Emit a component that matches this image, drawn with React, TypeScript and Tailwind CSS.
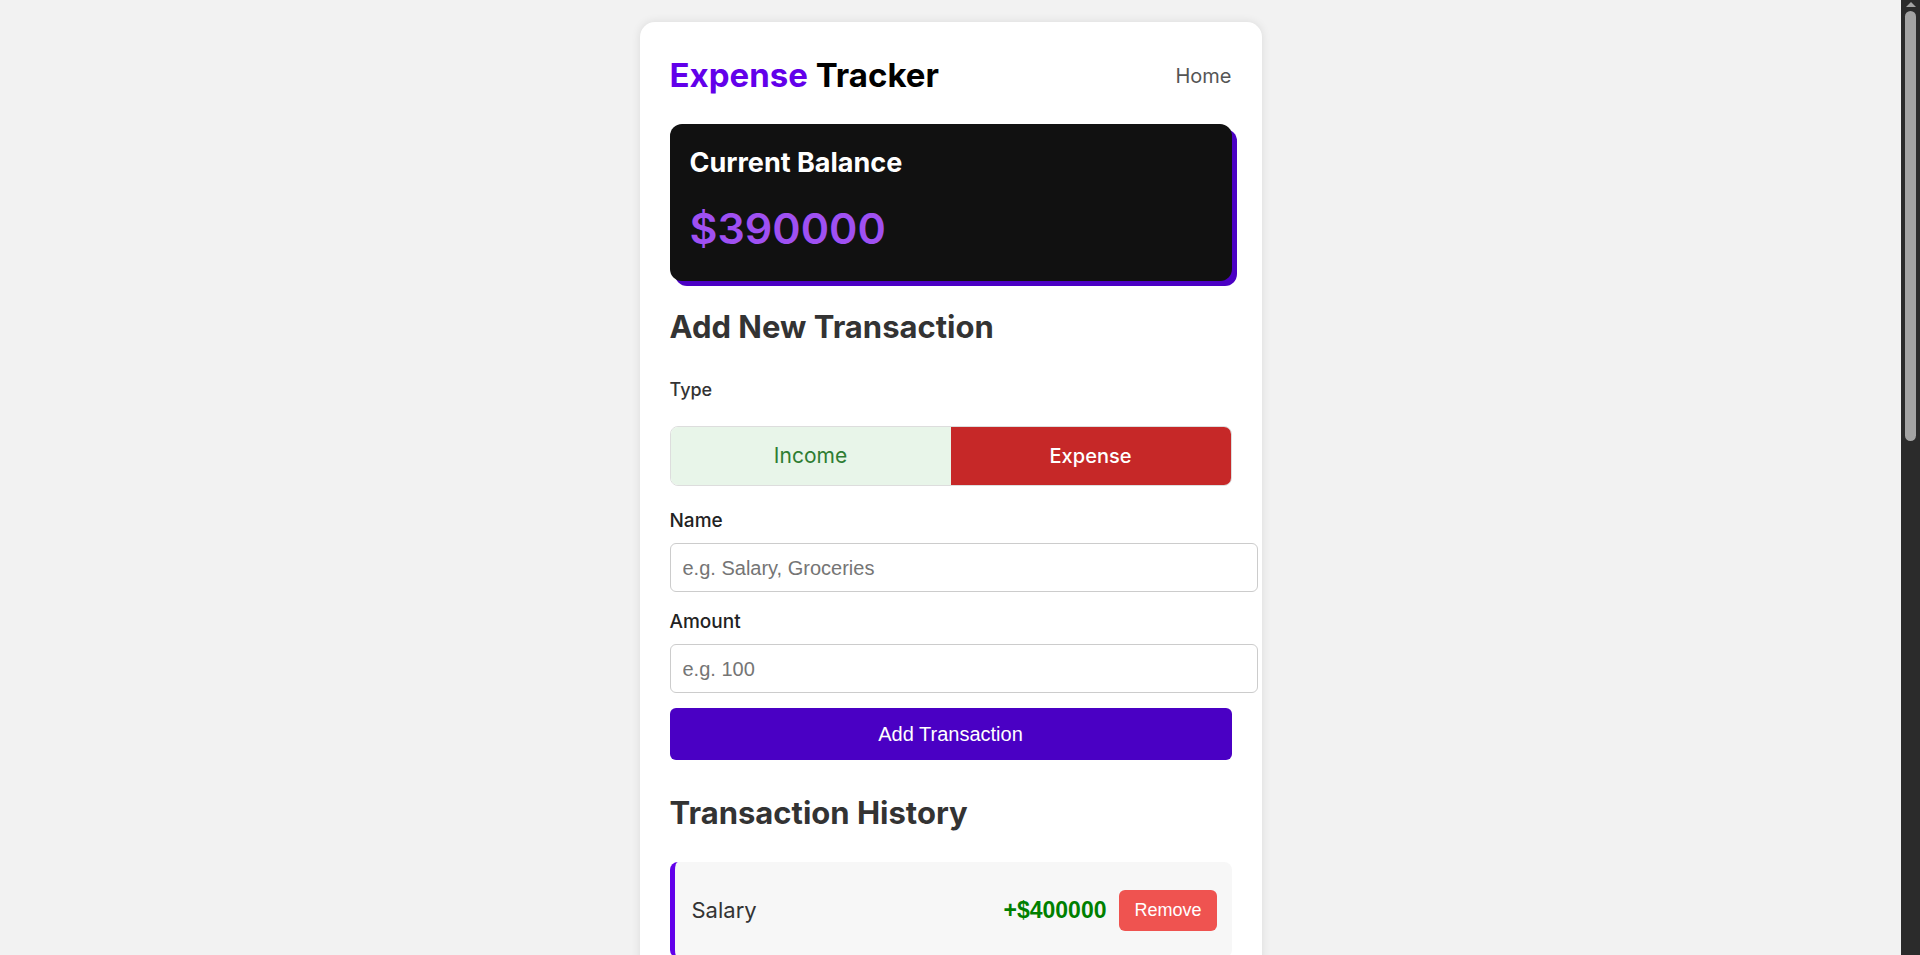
import React, { useState } from 'react';

type Tx = { id: number; name: string; amount: number };

const initial: Tx[] = [
  { id: 1, name: 'Salary', amount: 400000 },
  { id: 2, name: 'Groceries', amount: -10000 },
];

export default function App() {
  const [txs, setTxs] = useState<Tx[]>(initial);
  const [type, setType] = useState<'income' | 'expense'>('expense');
  const balance = txs.reduce((s, t) => s + t.amount, 0);

  return (
    <div className="min-h-screen bg-[#f2f2f2] py-[22px] pr-[19px] font-['Inter',sans-serif] text-[#333]">
      <div className="mx-auto w-[622px] rounded-[15px] bg-white p-[30px] shadow-[0_0_10px_rgba(0,0,0,0.1)]">
        {/* Header */}
        <div className="flex h-[48px] items-center justify-between">
          <h1 className="text-[33px] font-bold text-black">
            <span className="text-[#6200ea]">Expense</span> Tracker
          </h1>
          <a className="text-[20px] text-[#555]">Home</a>
        </div>

        {/* Balance */}
        <div className="mt-[24px] h-[157px] rounded-xl bg-[#111] px-5 pt-5 shadow-[5px_5px_0_#4b00c4]">
          <h2 className="h-[38px] text-[27px] leading-[38px] font-bold text-white">Current Balance</h2>
          <div className="mt-[16px] h-[60px] text-[43px] leading-[60px] font-semibold text-[#9f50f2]">
            ${balance}
          </div>
        </div>

        {/* Form */}
        <h2 className="mt-[26px] h-[40px] text-[31px] leading-[40px] font-bold">Add New Transaction</h2>

        <label className="mt-[31px] block h-[24px] text-[18px] leading-[24px] font-medium">Type</label>
        <div className="mt-[24px] flex h-[60px] overflow-hidden rounded-lg border border-[#ddd]">
          <button
            onClick={() => setType('income')}
            className={
              type === 'income'
                ? 'flex-1 bg-[#2e7d32] text-[21px] text-white'
                : 'flex-1 bg-[#e8f5e9] text-[21px] text-[#2e7d32]'
            }
          >
            Income
          </button>
          <button
            onClick={() => setType('expense')}
            className={
              type === 'expense'
                ? 'flex-1 bg-[#c62828] text-[20px] font-medium text-white'
                : 'flex-1 bg-[#ffebee] text-[20px] text-[#c62828]'
            }
          >
            Expense
          </button>
        </div>

        <label className="mt-[23px] block h-[24px] text-[19px] leading-[24px] font-medium text-[#222]">Name</label>
        <input
          placeholder="e.g. Salary, Groceries"
          className="mt-[10px] box-content block h-[23px] w-full rounded-md border border-[#ccc] px-3 py-3 font-['Liberation_Sans',Arial,sans-serif] text-[20px] placeholder:text-[#757575] focus:outline-none"
        />

        <label className="mt-[18px] block h-[24px] text-[19px] leading-[24px] font-medium text-[#222]">Amount</label>
        <input
          placeholder="e.g. 100"
          className="mt-[10px] box-content block h-[23px] w-full rounded-md border border-[#ccc] px-3 py-3 font-['Liberation_Sans',Arial,sans-serif] text-[20px] placeholder:text-[#757575] focus:outline-none"
        />

        <button className="mt-[15px] block h-[52px] w-full rounded-md bg-[#4a00c4] font-['Liberation_Sans',Arial,sans-serif] text-[20px] text-white">
          Add Transaction
        </button>

        {/* History */}
        <h2 className="mt-[33px] h-[40px] text-[31px] leading-[40px] font-bold">Transaction History</h2>

        <ul className="mt-[29px] flex flex-col gap-[10px]">
          {txs.map((t) => (
            <li
              key={t.id}
              className={`flex h-[96px] items-center justify-between rounded-lg border-l-[5px] bg-[#f7f7f7] pr-[15px] pl-[17px] ${
                t.amount > 0 ? 'border-[#6200ea]' : 'border-[#c62828]'
              }`}
            >
              <span className="text-[22px]">{t.name}</span>
              <div className="flex items-center gap-[13px]">
                <span
                  className={`font-['Liberation_Sans',Arial,sans-serif] text-[23px] font-bold ${
                    t.amount > 0 ? 'text-[#008000]' : 'text-[#c62828]'
                  }`}
                >
                  {t.amount > 0 ? '+' : '-'}${Math.abs(t.amount)}
                </span>
                <button
                  onClick={() => setTxs(txs.filter((x) => x.id !== t.id))}
                  className="h-[41px] rounded-md bg-[#ef5350] px-[15px] font-['Liberation_Sans',Arial,sans-serif] text-[18px] text-white"
                >
                  Remove
                </button>
              </div>
            </li>
          ))}
        </ul>
      </div>

      {/* browser scrollbar, drawn over the page edge */}
      <div className="fixed top-0 right-0 flex h-screen w-[19px] flex-col items-center bg-[#2b2b2b] pt-[2px]">
        <div className="h-0 w-0 border-x-[5px] border-b-[5px] border-x-transparent border-b-[#a3a3a3]" />
        <div className="mt-[4px] h-[430px] w-[11px] rounded-full bg-[#a3a3a3]" />
      </div>
    </div>
  );
}
